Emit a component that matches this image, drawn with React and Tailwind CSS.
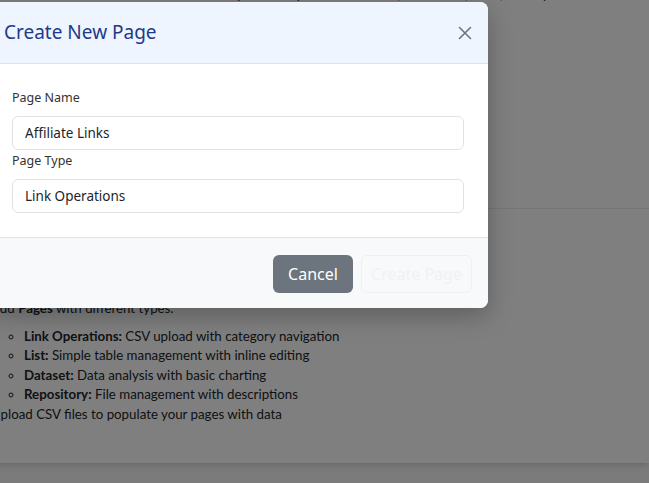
import { useState } from 'react';

const PAGE_TYPES = [
  { name: 'Link Operations', desc: 'CSV upload with category navigation' },
  { name: 'List', desc: 'Simple table management with inline editing' },
  { name: 'Dataset', desc: 'Data analysis with basic charting' },
  { name: 'Repository', desc: 'File management with descriptions' },
];

function CloseIcon() {
  return (
    <svg width="14" height="14" viewBox="0 0 14 14" fill="none" stroke="#6c757d" strokeWidth="1.6" strokeLinecap="round">
      <path d="M1.5 1.5 L12.5 12.5 M12.5 1.5 L1.5 12.5" />
    </svg>
  );
}

export default function App() {
  const [name, setName] = useState('Affiliate Links');
  const [type, setType] = useState('Link Operations');

  return (
    <div className="relative w-[649px] h-[483px] overflow-hidden bg-[#f6f6f6] text-[#212529]"
      style={{ fontFamily: '"Noto Sans", "Open Sans", sans-serif' }}>

      {/* page behind the modal */}
      <div className="bg-white h-[208px] overflow-hidden" style={{ fontFamily: 'Lato, "Noto Sans", sans-serif' }}>
        <div className="-mt-[16px] pl-[215px] text-[13.3px] leading-5 whitespace-nowrap">
          Keep track of your affiliate links, workflows, tools, and repositories from one place.
        </div>
      </div>
      <div className="bg-white h-[255px] border-t border-[#ececec] shadow-md -ml-[9px] text-[13.3px] leading-[19.5px]"
        style={{ fontFamily: 'Lato, "Noto Sans", sans-serif' }}>
        <div className="pt-[90px]">Add <b>Pages</b> with different types:</div>
        <ul className="list-[circle] pl-[33px] mt-[8px]">
          {PAGE_TYPES.map(t => (
            <li key={t.name}><b>{t.name}:</b> {t.desc}</li>
          ))}
        </ul>
        <div>Upload CSV files to populate your pages with data</div>
      </div>

      {/* backdrop */}
      <div className="absolute inset-0 bg-black/50" />

      {/* modal */}
      <div className="absolute left-[-12px] top-[2px] w-[500px] bg-white rounded-lg overflow-hidden shadow-[0_8px_24px_rgba(0,0,0,0.25)]">
        <div className="flex items-center justify-between h-[62px] px-4 bg-[#eef5ff] border-b border-[#dee2e6]">
          <h5 className="text-[19px] text-[#1e3a8a] leading-none">Create New Page</h5>
          <button className="w-6 h-6 flex items-center justify-center -mr-[5px]" aria-label="Close">
            <CloseIcon />
          </button>
        </div>

        <div className="px-6 pt-[24px] pb-[24px] border-b border-[#dee2e6]">
          <label className="block text-[12.5px] leading-[20px] text-[#333] mb-[8px]">Page Name</label>
          <input value={name} onChange={e => setName(e.target.value)}
            className="block w-full h-[34px] px-[12px] rounded-md border border-[#dee2e6] text-[13.5px] text-[#212529] outline-none" />
          <label className="block text-[12.5px] leading-[20px] text-[#333] mt-[1px] mb-[8px]">Page Type</label>
          <input value={type} onChange={e => setType(e.target.value)}
            className="block w-full h-[34px] px-[12px] rounded-md border border-[#dee2e6] text-[13.5px] text-[#212529] outline-none" />
        </div>

        <div className="flex justify-end gap-2 h-[70px] pt-[17px] pr-[16px] bg-[#f8f9fa]">
          <button className="w-[80px] h-[38px] rounded-md bg-[#6c757d] text-white text-[16px]">Cancel</button>
          <button disabled className="w-[111px] h-[38px] rounded-md border border-[#eef0f2] text-[#f0f2f4] text-[16px]">Create Page</button>
        </div>
      </div>
    </div>
  );
}
